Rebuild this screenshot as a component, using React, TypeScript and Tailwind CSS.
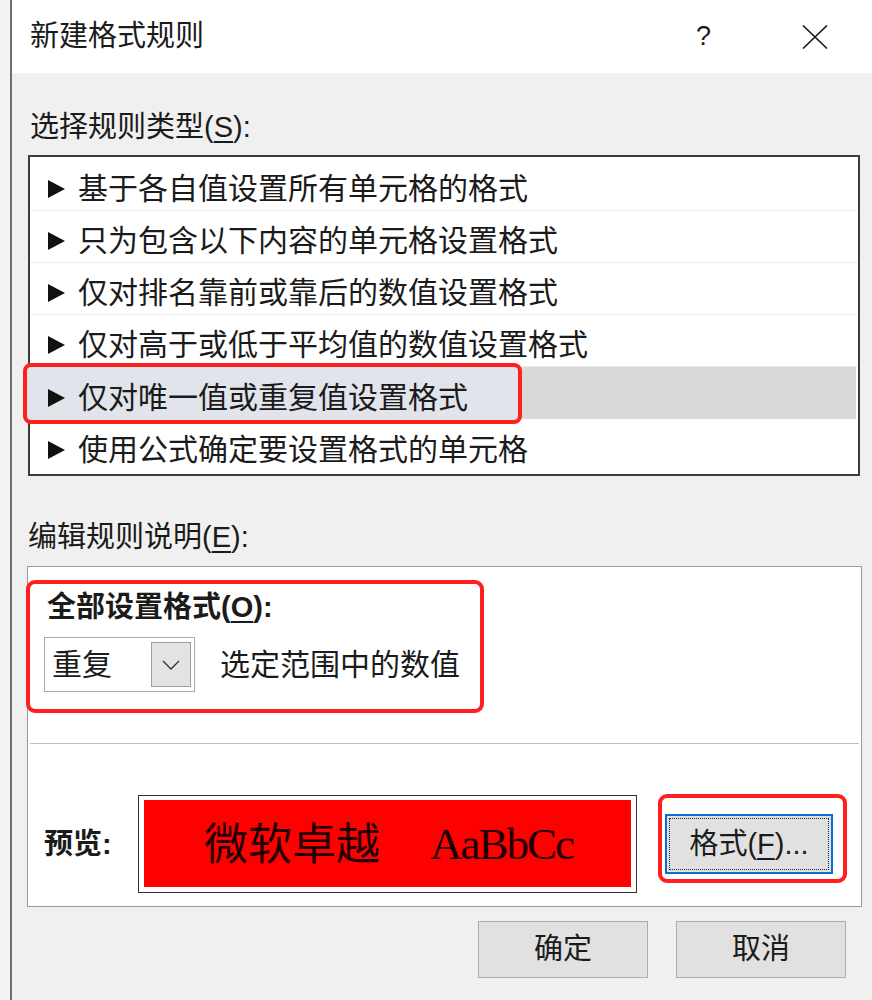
import { useState } from "react";

const rules = [
  "基于各自值设置所有单元格的格式",
  "只为包含以下内容的单元格设置格式",
  "仅对排名靠前或靠后的数值设置格式",
  "仅对高于或低于平均值的数值设置格式",
  "仅对唯一值或重复值设置格式",
  "使用公式确定要设置格式的单元格",
];

const font = {
  fontFamily: '"Liberation Sans", "Noto Sans CJK SC", sans-serif',
};

function Arrow() {
  return (
    <svg width="17" height="18" viewBox="0 0 17 18" className="shrink-0">
      <polygon points="0,0 17,9 0,18" fill="#111" />
    </svg>
  );
}

export default function App() {
  const [selected, setSelected] = useState(4);

  return (
    <div className="flex h-[1000px] w-full bg-[#f3f3f3] text-[#1b1b1b]" style={font}>
      <div className="w-[10px] shrink-0" />
      <div className="flex flex-1 flex-col overflow-hidden border-l-2 border-[#707070] bg-[#f0f0f0]">
        {/* title bar */}
        <div className="flex h-[73px] shrink-0 items-center bg-white pl-[18px] pr-[44px]">
          <span className="text-[29px] leading-none">新建格式规则</span>
          <span className="ml-auto w-[12px] text-center text-[27px] font-light leading-none">?</span>
          <svg width="26" height="24" viewBox="0 0 26 24" className="ml-[94px]">
            <path d="M1 0.5 L25 23.5 M25 0.5 L1 23.5" stroke="#1a1a1a" strokeWidth="1.6" />
          </svg>
        </div>

        <div className="flex flex-col pl-[16px]">
          <div className="ml-[2px] mt-[34px] h-[40px] text-[29px] leading-[40px]">
            选择规则类型(<span className="underline underline-offset-4">S</span>):
          </div>

          {/* rule type list */}
          <div className="mt-[8px] h-[321px] w-[832px] border-2 border-[#3c3c3c] bg-white pt-[2px]">
            {rules.map((r, i) => {
              const sel = i === selected;
              return (
                <div
                  key={r}
                  onClick={() => setSelected(i)}
                  className={
                    sel
                      ? "relative mr-[2px] flex h-[52px] items-center bg-[#d9d9d9] pl-[18px] pt-[9px]"
                      : i < 5
                        ? "relative flex h-[52px] items-center border-b border-[#ececec] pl-[18px] pt-[9px]"
                        : "relative flex h-[52px] items-center pl-[18px] pt-[9px]"
                  }
                >
                  {sel && (
                    <div className="absolute left-[-7px] top-[-4px] h-[61px] w-[499px] rounded-[8px] border-4 border-[#ff1f1f] bg-[#e2e4eb]" />
                  )}
                  <div className="relative flex items-center">
                    <Arrow />
                    <span className="ml-[13px] text-[30px] leading-none">{r}</span>
                  </div>
                </div>
              );
            })}
          </div>

          <div className="ml-[0px] mt-[41px] h-[40px] text-[29px] leading-[40px]">
            编辑规则说明(<span className="underline underline-offset-4">E</span>):
          </div>

          {/* rule description */}
          <div className="relative ml-[-1px] mt-[9px] flex h-[341px] w-[835px] flex-col border border-[#9a9a9a] bg-white">
            <div className="pointer-events-none absolute left-[-2px] top-[13px] h-[133px] w-[458px] rounded-[9px] border-4 border-[#ff1f1f]" />

            <div className="ml-[19px] mt-[20px] h-[40px] text-[29px] font-bold leading-[40px]">
              全部设置格式(<span className="underline underline-offset-4">O</span>):
            </div>

            <div className="ml-[16px] mt-[10px] flex items-center">
              <div className="flex h-[55px] w-[151px] items-center border border-[#ababab] bg-white pl-[7px] pr-[3px]">
                <span className="text-[30px] leading-none">重复</span>
                <div className="ml-auto flex h-[45px] w-[40px] items-center justify-center border border-[#9f9f9f] bg-[#e3e3e3]">
                  <svg width="18" height="10" viewBox="0 0 18 10">
                    <path d="M1 1 L9 9 L17 1" fill="none" stroke="#333" strokeWidth="1.3" />
                  </svg>
                </div>
              </div>
              <span className="ml-[25px] text-[30px] leading-none">选定范围中的数值</span>
            </div>

            <div className="mx-[2px] mt-[51px] h-px bg-[#bdbdbd]" />

            <div className="ml-[16px] mt-[51px] flex items-center">
              <span className="w-[94px] text-[29px] font-bold leading-none">预览:</span>
              <div className="h-[98px] w-[499px] border border-[#333] bg-white p-[5px] pt-[4px]">
                <div className="flex h-full items-center bg-[#ff0000] pl-[60px] pt-[2px] text-[#1e0000]">
                  <span className="text-[44px] leading-none">微软卓越</span>
                  <span
                    className="ml-[50px] text-[45px] leading-none tracking-[-2px]"
                    style={{ fontFamily: '"Liberation Serif", serif' }}
                  >
                    AaBbCc
                  </span>
                </div>
              </div>
              <div className="relative ml-[28px]">
                <div className="pointer-events-none absolute bottom-[-9px] left-[-7px] right-[-14px] top-[-20px] rounded-[9px] border-4 border-[#ff1f1f]" />
                <button className="relative flex h-[60px] w-[168px] items-center justify-center border-2 border-[#0a6fd6] bg-[#e1e1e1] p-[2px]">
                  <div className="flex h-full w-full items-center justify-center border border-dotted border-[#222]">
                    <span className="text-[29px] leading-none">
                      格式(<span className="underline underline-offset-4">F</span>)...
                    </span>
                  </div>
                </button>
              </div>
            </div>
          </div>

          {/* footer buttons */}
          <div className="mt-[14px] flex justify-end gap-[28px] pr-[26px]">
            <button className="flex h-[57px] w-[170px] items-center justify-center border border-[#adadad] bg-[#e1e1e1] text-[29px]">
              确定
            </button>
            <button className="flex h-[57px] w-[170px] items-center justify-center border border-[#adadad] bg-[#e1e1e1] text-[29px]">
              取消
            </button>
          </div>
        </div>
      </div>
    </div>
  );
}
